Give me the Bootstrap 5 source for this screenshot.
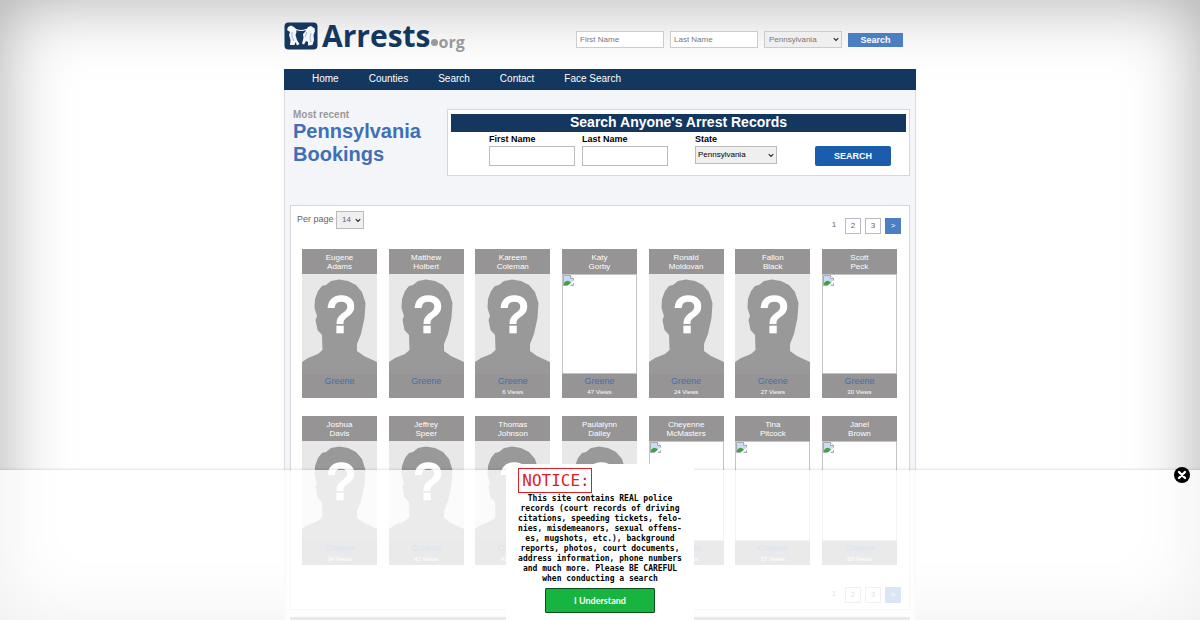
<!DOCTYPE html>
<html lang="en">
<head>
<meta charset="utf-8">
<meta name="viewport" content="width=device-width, initial-scale=1">
<title>Arrests.org - Pennsylvania Bookings</title>
<link href="https://cdn.jsdelivr.net/npm/bootstrap@5.3.0/dist/css/bootstrap.min.css" rel="stylesheet">
<style>
body{font-family:"Liberation Sans",Arial,sans-serif;font-size:9px;line-height:1.2;color:#666;background:#fff;min-height:100vh;box-shadow:inset 0 0 70px #aaa}
a{text-decoration:none}
.site-wrap{max-width:632px}
.site-head{height:69px;padding:0 13px 0 0}
.brand-link{font-family:"Open Sans","Noto Sans",sans-serif;font-weight:700;color:#14375f;padding-top:2px}
.brand-link .brand-name{font-size:30px;line-height:36px;padding-left:4px}
.brand-link .brand-tld{font-size:16px;line-height:20px;color:#999;padding-top:12px}
.brand-dot{width:7px;height:7px;border-radius:50%;background:#999;margin:14px 1px 0 0}
.field,.pick{font-size:8px;line-height:1;border:1px solid #bbb;border-radius:0;background-color:#fff;color:#000}
.field::placeholder{color:#777;opacity:1}
.pick{appearance:none;background:#efefef url("data:image/svg+xml,%3Csvg xmlns='http://www.w3.org/2000/svg' viewBox='0 0 8 6'%3E%3Cpath d='M1 1.2 4 4.2 7 1.2' fill='none' stroke='%23222' stroke-width='1.5'/%3E%3C/svg%3E") no-repeat right 2px center/6px 5px;padding:0 10px 0 2px}
.quick{gap:6px;padding-top:10px}
.quick .field{width:88px;height:17px;padding:0 3px;border-color:#ccc}
.quick .pick{width:78px;height:17px;color:#777;padding-left:4px;border-color:#ccc}
.quick-go{width:55px;height:14px;padding:0;border:0;background:#4a7fc3;color:#fff;font-weight:700;font-size:9px;line-height:14px}
.topnav{background:#14375f;padding:0 28px;gap:30px;height:21px}
.topnav a{color:#fff;font-size:10px;line-height:20px}
.site-main{background:#f4f5f8;border:solid #dcdce0;border-width:0 1px;padding:19px 5px 0}
.page-title{font-size:20px;line-height:23px;font-weight:700;color:#3f70b5;width:153px;padding-left:3px}
.page-title small{display:block;font-size:10px;line-height:11px;color:#999;font-weight:700}
.panel{background:#fff;border:1px solid #d5d7da}
.finder{padding:4px 3px 9px}
.finder h2{background:#14375f;color:#fff;font-size:14px;line-height:17px;padding-bottom:1px;font-weight:700;margin:0}
.finder label{display:block;font-size:9px;font-weight:700;color:#000;line-height:14px}
.finder-row{padding:0 15px 0 38px;gap:7px}
.finder .field{width:86px;height:20px;padding:0 3px}
.finder .pick{width:82px;height:18px}
.finder-state{margin-left:20px}
.finder-go{width:76px;height:20px;padding:0;border:0;border-radius:2px;background:#1a5dad;color:#fff;font-size:9px;font-weight:700}
.listing{margin-top:29px;padding:5px 8px 6px 6px}
.perpage .pick{width:28px;height:18px;padding-left:5px;color:#666}
.pager{gap:4px;font-size:8px;line-height:14px;text-align:center}
.pager-top{padding-top:7px}
.pager a,.pager span{width:16px;height:16px;border:1px solid #b9bbc4;color:#666}
.pager span{width:14px;border-color:transparent;line-height:12px}
.pager a.next{background:#4a7fc3;border-color:#4a7fc3;color:#fff}
.people{display:grid;grid-template-columns:repeat(7,75px);justify-content:space-between;row-gap:18px;padding:15px 4px 22px 5px}
.person{background:#969494;color:#fff;text-align:center}
.person-name{font-size:8px;line-height:9px;height:25px;padding-top:4px}
.person-name a{color:#fff}
.shot{display:block;width:75px;height:100px;background:#e8e8e8}
.shot.missing{background:#fff;border:1px solid #c4c4c4}
.person-foot{height:24px;font-size:6px;line-height:8px}
.person-foot a{display:block;color:#3f70b5;font-size:9px;line-height:14px}
.strip{height:4px;margin-top:7px;background:#969494}
.notice-bar{background:rgba(255,255,255,.8);height:150px;box-shadow:0 0 3px rgba(0,0,0,.2)}
.notice-box{width:188px;height:156px;background:#fff;margin-top:-6px;color:#000;text-align:center;padding-top:4px;font-family:"DejaVu Sans Mono",monospace;font-size:8px;font-weight:700}
.notice-tag{display:block;width:74px;margin-left:12px;padding-left:2px;font-size:16px;line-height:23px;font-weight:400;color:#e01b24;border:1px solid #e01b24}
.notice-text{line-height:10px;margin:1px 0 4px;white-space:nowrap}
.notice-ok{width:110px;height:25px;padding:0;border:1px solid #0b4d1c;border-radius:1px;background:#17b440;color:#fff;font:700 9px Lato,sans-serif}
.close-x{right:10px;top:-3px;width:16px;height:16px;padding:0;border:0;background:none;line-height:0}
</style>
</head>
<body>
<div class="site-wrap mx-auto">
  <header class="site-head d-flex justify-content-between align-items-center">
    <a href="#" class="brand-link d-flex align-items-center">
      <svg width="34" height="28" viewBox="0 0 34 28" aria-hidden="true">
        <rect x=".5" y=".5" width="33" height="27" rx="4" fill="#14375f"/>
        <path d="M4 5 7 3.500 10 5 12 7 12.500 10 11.500 13 13 18 15.500 22 13 23.500 11.500 20 10.500 23 6 23 6.500 18 5 13 6 10 3 8zM22 8 24 5 27 4 30 6 31 9 29.500 13 30 18 28.500 23 24 23.500 24 20 22 19 20 22.500 18 21.500 19.500 16 19 12 21 10z" fill="#f2f5f9"/>
        <path d="M4 6.500 12 7.500q5 2 10 0L31 7" fill="none" stroke="#fff" stroke-width="1.200"/>
        <path d="M8 10v5l2 4M23 10l-2 5M27 11l-1 5 1 4" fill="none" stroke="#8fa3bd" stroke-width=".8"/>
      </svg>
      <span class="brand-name">Arrests</span>
      <span class="brand-dot"></span><span class="brand-tld">org</span>
    </a>
    <form class="quick d-flex align-items-center">
      <input class="field" type="text" placeholder="First Name" aria-label="First Name">
      <input class="field" type="text" placeholder="Last Name" aria-label="Last Name">
      <select class="pick" aria-label="State"><option>Pennsylvania</option></select>
      <button class="quick-go" type="button">Search</button>
    </form>
  </header>
  <nav class="topnav d-flex">
    <a href="#">Home</a><a href="#">Counties</a><a href="#">Search</a><a href="#">Contact</a><a href="#">Face Search</a>
  </nav>
  <main class="site-main">
    <div class="d-flex align-items-start">
      <h1 class="page-title mb-0 flex-shrink-0"><small>Most recent</small>Pennsylvania Bookings</h1>
      <form class="finder panel flex-grow-1 ms-1">
        <h2 class="text-center">Search Anyone's Arrest Records</h2>
        <div class="finder-row d-flex">
          <div><label for="fn">First Name</label><input id="fn" class="field d-block" type="text"></div>
          <div><label for="ln">Last Name</label><input id="ln" class="field d-block" type="text"></div>
          <div class="finder-state"><label for="st">State</label><select id="st" class="pick d-block"><option>Pennsylvania</option></select></div>
          <button class="finder-go ms-auto align-self-end" type="button">SEARCH</button>
        </div>
      </form>
    </div>
    <section class="listing panel">
      <div class="d-flex justify-content-between">
        <div class="perpage"><label for="pp">Per page</label> <select id="pp" class="pick"><option>14</option></select></div>
        <div class="pager pager-top d-flex"><span>1</span><a href="#">2</a><a href="#">3</a><a href="#" class="next">&gt;</a></div>
      </div>
      <div class="people" id="people"></div>
      <div class="pager d-flex justify-content-end"><span>1</span><a href="#">2</a><a href="#">3</a><a href="#" class="next">&gt;</a></div>
    </section>
    <div class="strip"></div>
  </main>
</div>

<div class="notice-bar fixed-bottom">
  <div class="notice-box mx-auto">
    <span class="notice-tag">NOTICE:</span>
    <p class="notice-text">This site contains REAL police<br>records (court records of driving<br>citations, speeding tickets, felo-<br>nies, misdemeanors, sexual offens-<br>es, mugshots, etc.), background<br>reports, photos, court documents,<br>address information, phone numbers<br>and much more. Please BE CAREFUL<br>when conducting a search</p>
    <button class="notice-ok" type="button">I Understand</button>
  </div>
  <button class="close-x position-absolute" type="button" aria-label="Close">
    <svg width="16" height="16" viewBox="0 0 16 16"><circle cx="8" cy="8" r="8"/><path d="m5 5 6 6m0-6-6 6" stroke="#fff" stroke-width="2.4" stroke-linecap="round"/></svg>
  </button>
</div>
<script src="https://cdn.jsdelivr.net/npm/bootstrap@5.3.0/dist/js/bootstrap.bundle.min.js"></script>
<script>
const people = [
  ["Eugene","Adams","",1],["Matthew","Holbert","",1],["Kareem","Coleman","6",1],["Katy","Gorby","47",0],
  ["Ronald","Moldovan","24",1],["Fallon","Black","27",1],["Scott","Peck","30",0],
  ["Joshua","Davis","34",1],["Jeffrey","Speer","42",1],["Thomas","Johnson","47",1],["Paulalynn","Dailey","",1],
  ["Cheyenne","McMasters","45",0],["Tina","Pitcock","57",0],["Janel","Brown","60",0]
];
const silhouette = `<svg class="shot" viewBox="0 0 75 100"><path fill="#999" d="M0 100V88L6 84 16 80 20.500 76 20 61 15.500 56 13.500 46 15 42 12.500 34 13 25 16 17 20 12 24 11 29 7 37 5.500 46 7 54 11 60 18 63.500 29 62.500 44 59 60 55 70V77L62 82 75 88V100Z"/><text x="39" y="58" text-anchor="middle" font-family="Liberation Sans" font-size="50" fill="#fff" stroke="#fff" stroke-width="2.500">?</text></svg>`;
const missing = `<svg class="shot missing" viewBox="0 0 73 98"><path d="M.5 .5h7l3 3v7h-10z" fill="#c9dcf5" stroke="#999" stroke-width=".8"/><path d="M7.500 .5v3h3" fill="#fff" stroke="#999" stroke-width=".8"/><path d="M1 10V8q4-5 8 1v1z" fill="#43a047"/><path d="M5 11.500 11.500 6" stroke="#fff" stroke-width="1.800"/></svg>`;
document.getElementById("people").innerHTML = people.map(([first,last,views,photo]) =>
  `<article class="person"><div class="person-name"><a href="#">${first}<br>${last}</a></div>${photo ? silhouette : missing}<div class="person-foot"><a href="#">Greene</a>${views ? views+" Views" : ""}</div></article>`).join("");
</script>
</body>
</html>
